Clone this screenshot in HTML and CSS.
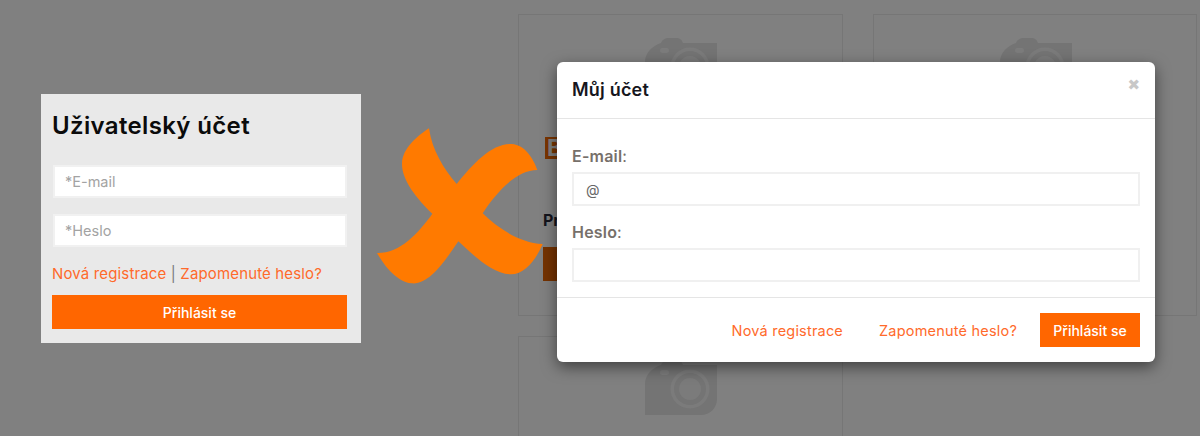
FILE: index.html
```html
<!DOCTYPE html>
<html lang="cs">
<head>
  <meta charset="UTF-8">
  <title>Můj účet</title>
  <link rel="stylesheet" href="styles.css">
</head>
<body>
  <div class="page">
    <div class="left-column">
      <form class="login-box">
        <h2>Uživatelský účet</h2>
        <input class="login-input" type="text" placeholder="*E-mail">
        <input class="login-input" type="password" placeholder="*Heslo">
        <p class="login-links"><a href="#">Nová registrace</a> | <a href="#">Zapomenuté heslo?</a></p>
        <button class="login-btn" type="button">Přihlásit se</button>
      </form>
    </div>

    <div class="cards">
      <div class="card">
        <svg class="camera" viewBox="0 0 72 55"><use href="#camera-icon"></use></svg>
        <div class="card-title"><span>B</span></div>
        <div class="card-price">Pr</div>
        <div class="card-btn"></div>
      </div>
      <div class="card">
        <svg class="camera" viewBox="0 0 72 55"><use href="#camera-icon"></use></svg>
      </div>
      <div class="card">
        <svg class="camera" viewBox="0 0 72 55"><use href="#camera-icon"></use></svg>
      </div>
    </div>

    <svg class="big-x" viewBox="0 0 660 570">
      <path d="M207 55 C216 120 250 175 290 222 C340 160 395 100 455 102 C495 105 520 145 532 180 C470 180 410 245 368 310 C420 360 480 398 548 402 C530 445 495 495 450 493 C395 490 340 435 295 394 C250 460 205 525 155 520 C110 515 75 470 51 429 C120 430 175 370 217 311 C170 265 125 210 126 160 C128 115 170 80 207 55 Z"></path>
    </svg>

    <div class="modal">
      <div class="modal-header">
        <h3>Můj účet</h3>
        <span class="modal-close">✖</span>
      </div>
      <div class="modal-body">
        <label class="modal-label"><b>E-mail</b>:</label>
        <input class="modal-input" type="text" value="@">
        <label class="modal-label"><b>Heslo</b>:</label>
        <input class="modal-input" type="password">
      </div>
      <div class="modal-footer">
        <a href="#">Nová registrace</a>
        <a href="#">Zapomenuté heslo?</a>
        <button class="modal-btn" type="button">Přihlásit se</button>
      </div>
    </div>
  </div>

  <svg class="defs" width="0" height="0">
    <symbol id="camera-icon" viewBox="0 0 72 55">
      <path fill="#747474" d="M0 55 V24 C0 15 7 8 16 5 C17 2 20 0 24 0 H31 C35 0 37 2 38 5 H72 V39 C72 48 65 55 56 55 Z"></path>
      <circle cx="45" cy="29" r="17.75" fill="none" stroke="#7b7b7b" stroke-width="3.5"></circle>
      <circle cx="45" cy="29" r="11" fill="#7b7b7b"></circle>
      <rect x="15" y="10" width="9" height="5" rx="2.5" fill="#7c7c7c"></rect>
    </symbol>
  </svg>
</body>
</html>
```

FILE: styles.css
```css
* {
  box-sizing: border-box;
}
html, body {
  margin: 0;
  padding: 0;
}
body {
  font-family: Inter, "Noto Sans", sans-serif;
}
a {
  color: #ff6a2b;
  text-decoration: none;
}
.page {
  position: relative;
  display: flex;
  width: 1200px;
  height: 436px;
  overflow: hidden;
  background: #808080;
}
.left-column {
  width: 518px;
  padding: 94px 0 0 41px;
}
.login-box {
  display: flex;
  flex-direction: column;
  width: 320px;
  height: 249px;
  padding: 0 14px 0 11px;
  background: #e9e9e9;
}
.login-box h2 {
  margin: 17px 0 24px;
  color: #0b0b0b;
  font-size: 24px;
  line-height: 30px;
  font-weight: 600;
  letter-spacing: 0.35px;
}
.login-input {
  width: 294px;
  height: 33px;
  margin: 0 0 16px 1px;
  padding: 0 10px;
  border: 2px solid #f1f1f1;
  background: #fff;
  font-family: inherit;
  font-size: 14.5px;
}
.login-input::placeholder {
  color: #a3a3a3;
  opacity: 1;
}
.login-links {
  margin: 0 0 10px;
  color: #77797c;
  font-size: 15px;
  line-height: 22px;
  letter-spacing: 0.15px;
  white-space: nowrap;
}
.login-btn {
  width: 295px;
  height: 34px;
  border: none;
  background: #ff6600;
  color: #fff;
  font-family: inherit;
  font-size: 14px;
  font-weight: 500;
}

.cards {
  display: grid;
  grid-template-columns: 325px 324px;
  grid-auto-rows: 302px;
  gap: 20px 30px;
  padding-top: 14px;
}
.card {
  display: flex;
  flex-direction: column;
  padding: 23px 0 0 24px;
  border: 1px solid #767676;
}
.camera {
  width: 72px;
  height: 55px;
  margin-left: 102px;
  flex: none;
}
.card-title {
  margin: 44px 0 0 2px;
  font-size: 23px;
  line-height: 22px;
  font-weight: 700;
  color: #808080;
}
.card-title span {
  display: inline-block;
  padding: 0 2px;
  background: #7a3500;
}
.card-price {
  margin-top: 51px;
  color: #14141c;
  font-size: 16px;
  line-height: 20px;
  font-weight: 700;
}
.card-btn {
  width: 120px;
  height: 34px;
  margin-top: 17px;
  background: #743200;
}

/* the big cross sits on top of the dimmed page */
.big-x {
  position: absolute;
  left: 360px;
  top: 110px;
  width: 220px;
  height: 190px;
  fill: #ff7a00;
}

.modal {
  position: absolute;
  left: 557px;
  top: 62px;
  width: 598px;
  height: 300px;
  display: flex;
  flex-direction: column;
  border-radius: 6px;
  background: #fff;
  box-shadow: 0 5px 15px rgba(0, 0, 0, 0.5);
}
.modal-header {
  display: flex;
  justify-content: space-between;
  height: 57px;
  padding: 0 15px;
  border-bottom: 1px solid #e5e5e5;
}
.modal-header h3 {
  margin: 15px 0 0;
  color: #16161d;
  font-size: 18px;
  line-height: 26px;
  font-weight: 600;
  letter-spacing: 0.2px;
}
.modal-close {
  margin-top: 13px;
  color: #c8c8c8;
  font-family: "DejaVu Sans", sans-serif;
  font-size: 15px;
  line-height: 20px;
}
.modal-body {
  display: flex;
  flex-direction: column;
  flex: 1;
  padding: 25px 15px 0;
  border-bottom: 1px solid #e5e5e5;
}
.modal-label {
  height: 28px;
  color: #77706a;
  font-size: 16px;
  line-height: 24px;
  letter-spacing: 0.2px;
}
.modal-label b {
  font-weight: 600;
}
.modal-input {
  width: 568px;
  height: 34px;
  flex: none;
  margin-bottom: 14px;
  padding: 0 12px;
  border: 2px solid #f0f0f0;
  background: #fff;
  color: #666;
  font-family: inherit;
  font-size: 14px;
}
.modal-footer {
  display: flex;
  justify-content: flex-end;
  align-items: center;
  height: 64px;
  padding: 0 15px 0;
  font-size: 14.5px;
  letter-spacing: 0.2px;
}
.modal-footer a {
  margin-right: 36px;
}
.modal-footer a:nth-child(2) {
  margin-right: 23px;
}
.modal-btn {
  width: 100px;
  height: 34px;
  border: none;
  background: #ff6600;
  color: #fff;
  font-family: inherit;
  font-size: 14px;
  font-weight: 500;
}
.defs {
  position: absolute;
}
```
